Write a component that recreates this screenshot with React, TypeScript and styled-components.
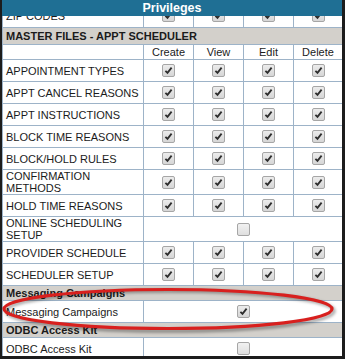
import React, { useLayoutEffect, useRef } from 'react';
import styled, { createGlobalStyle } from 'styled-components';

const GlobalStyle = createGlobalStyle`
  html, body {
    margin: 0;
    padding: 0;
    background: #ffffff;
  }
`;

const Frame = styled.div`
  position: relative;
  box-sizing: border-box;
  width: 345px;
  height: 359px;
  display: flex;
  flex-direction: column;
  border-left: 2px solid #1c1c1c;
  border-right: 3px solid #1c1c1c;
  border-bottom: 3px solid #1c1c1c;
  background: #ffffff;
  font-family: 'Liberation Sans', Arial, sans-serif;
  color: #1b1b1b;
  overflow: hidden;
`;

const TitleBar = styled.div`
  flex: 0 0 16px;
  display: flex;
  align-items: center;
  justify-content: center;
  background: #1f6f94;
  color: #ffffff;
  font-size: 12.5px;
  font-weight: bold;
  line-height: 16px;
`;

const Viewport = styled.div`
  flex: 1 1 auto;
  overflow: hidden;
`;

const Table = styled.table`
  width: 340px;
  border-collapse: collapse;
  table-layout: fixed;
  font-size: 11px;
`;

const Row = styled.tr<{ $h: number }>`
  height: ${p => p.$h}px;
`;

const SectionCell = styled.td`
  background: #d3d0cb;
  font-weight: bold;
  padding: 0 3px;
  line-height: 12px;
  border: 1px solid #9db3c8;
  border-right: none;
  white-space: nowrap;
  overflow: hidden;
`;

const LabelCell = styled.td`
  padding: 0 3px;
  line-height: 12px;
  border: 1px solid #9db3c8;
  vertical-align: middle;
`;

const HeadCell = styled.td`
  padding: 0;
  text-align: center;
  line-height: 12px;
  border: 1px solid #9db3c8;
`;

const BoxCell = styled.td`
  padding: 0;
  text-align: center;
  vertical-align: middle;
  border: 1px solid #9db3c8;
`;

const Box = styled.span<{ $on: boolean }>`
  box-sizing: border-box;
  display: inline-flex;
  align-items: center;
  justify-content: center;
  width: 13px;
  height: 13px;
  vertical-align: middle;
  border: 1px solid #a6a6a6;
  border-radius: 2px;
  background: ${p =>
    p.$on
      ? 'linear-gradient(#ececec, #d6d6d6)'
      : 'linear-gradient(#f1f1f1, #dfdfdf)'};
`;

const Ring = styled.svg`
  position: absolute;
  left: 0;
  top: 0;
  pointer-events: none;
`;

const Check = ({ on }: { on: boolean }) => (
  <Box $on={on}>
    {on && (
      <svg width="9" height="9" viewBox="0 0 9 9">
        <path d="M1.4 4.8 L3.5 6.9 L7.6 1.6" fill="none" stroke="#2e2e2e" strokeWidth="1.8" />
      </svg>
    )}
  </Box>
);

type Item =
  | { kind: 'section'; label: string; h: number }
  | { kind: 'head' }
  | { kind: 'all'; label: string; h: number }
  | { kind: 'one'; label: string; h: number; on: boolean };

const items: Item[] = [
  { kind: 'all', label: 'ZIP CODES', h: 24 },
  { kind: 'section', label: 'MASTER FILES - APPT SCHEDULER', h: 17 },
  { kind: 'head' },
  { kind: 'all', label: 'APPOINTMENT TYPES', h: 22 },
  { kind: 'all', label: 'APPT CANCEL REASONS', h: 22 },
  { kind: 'all', label: 'APPT INSTRUCTIONS', h: 22 },
  { kind: 'all', label: 'BLOCK TIME REASONS', h: 22 },
  { kind: 'all', label: 'BLOCK/HOLD RULES', h: 22 },
  { kind: 'all', label: 'CONFIRMATION METHODS', h: 25 },
  { kind: 'all', label: 'HOLD TIME REASONS', h: 22 },
  { kind: 'one', label: 'ONLINE SCHEDULING SETUP', h: 25, on: false },
  { kind: 'all', label: 'PROVIDER SCHEDULE', h: 22 },
  { kind: 'all', label: 'SCHEDULER SETUP', h: 22 },
  { kind: 'section', label: 'Messaging Campaigns', h: 15 },
  { kind: 'one', label: 'Messaging Campaigns', h: 22, on: true },
  { kind: 'section', label: 'ODBC Access Kit', h: 15 },
  { kind: 'one', label: 'ODBC Access Kit', h: 22, on: false },
];

const columns = ['Create', 'View', 'Edit', 'Delete'];

const renderRow = (item: Item, i: number) => {
  switch (item.kind) {
    case 'section':
      return (
        <Row key={i} $h={item.h}>
          <SectionCell colSpan={5}>{item.label}</SectionCell>
        </Row>
      );
    case 'head':
      return (
        <Row key={i} $h={15}>
          <HeadCell />
          {columns.map(c => (
            <HeadCell key={c}>{c}</HeadCell>
          ))}
        </Row>
      );
    case 'all':
      return (
        <Row key={i} $h={item.h}>
          <LabelCell>{item.label}</LabelCell>
          {columns.map(c => (
            <BoxCell key={c}>
              <Check on />
            </BoxCell>
          ))}
        </Row>
      );
    case 'one':
      return (
        <Row key={i} $h={item.h}>
          <LabelCell>{item.label}</LabelCell>
          <BoxCell colSpan={4}>
            <Check on={item.on} />
          </BoxCell>
        </Row>
      );
  }
};

const App = () => {
  const viewport = useRef<HTMLDivElement>(null);

  // the list is shown scrolled a little, with the ZIP CODES row half hidden
  useLayoutEffect(() => {
    if (viewport.current) viewport.current.scrollTop = 13;
  }, []);

  return (
    <>
      <GlobalStyle />
      <Frame>
        <TitleBar>Privileges</TitleBar>
        <Viewport ref={viewport}>
          <Table>
            <colgroup>
              <col style={{ width: 141 }} />
              <col style={{ width: 50 }} />
              <col style={{ width: 50 }} />
              <col style={{ width: 50 }} />
              <col style={{ width: 49 }} />
            </colgroup>
            <tbody>{items.map(renderRow)}</tbody>
          </Table>
        </Viewport>
        <Ring width="345" height="359" viewBox="0 0 345 359">
          <defs>
            <filter id="shade" x="-10%" y="-30%" width="120%" height="160%">
              <feGaussianBlur stdDeviation="1.6" />
            </filter>
          </defs>
          <ellipse cx="168" cy="311" rx="164" ry="20" fill="none" stroke="rgba(0,0,0,0.35)" strokeWidth="3.5" filter="url(#shade)" />
          <ellipse cx="166" cy="309" rx="164" ry="19.5" fill="none" stroke="#d8201e" strokeWidth="3.2" />
        </Ring>
      </Frame>
    </>
  );
};

export default App;
